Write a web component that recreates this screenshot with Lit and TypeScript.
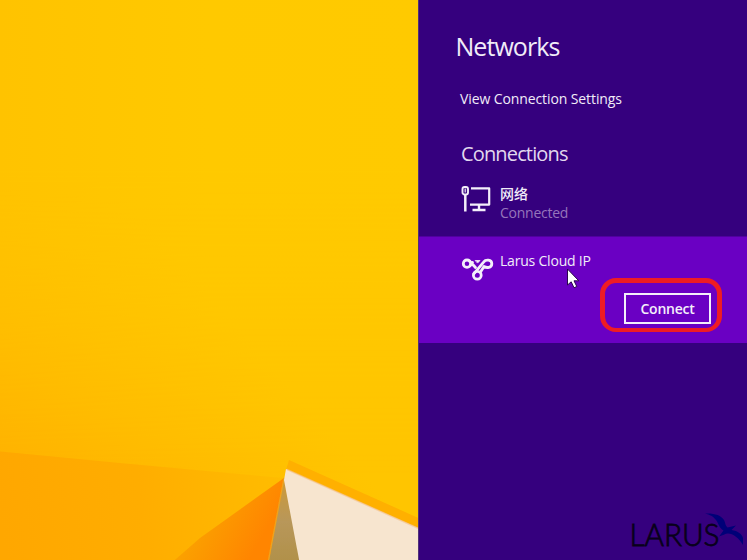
import { LitElement, html, css } from "lit";
import { customElement } from "lit/decorators.js";

@customElement("wall-paper")
class WallPaper extends LitElement {
  static styles = css`
    :host { display: block; overflow: hidden; }
    svg { display: block; }
  `;
  render() {
    return html`<svg width="418" height="560" viewBox="0 0 418 560">
      <defs>
        <linearGradient id="sky" gradientUnits="userSpaceOnUse" x1="20" y1="520" x2="240" y2="330">
          <stop offset="0" stop-color="#ffb000" />
          <stop offset="0.5" stop-color="#ffbb00" />
          <stop offset="1" stop-color="#ffc500" />
        </linearGradient>
        <linearGradient id="top" x1="0" y1="0" x2="1" y2="0">
          <stop offset="0" stop-color="#ffc300" />
          <stop offset="0.5" stop-color="#ffc900" />
          <stop offset="1" stop-color="#ffca00" />
        </linearGradient>
        <linearGradient id="fade" x1="0" y1="0" x2="0" y2="1">
          <stop offset="0" stop-color="#fff" />
          <stop offset="0.3" stop-color="#fff" />
          <stop offset="0.85" stop-color="#000" />
        </linearGradient>
        <mask id="m"><rect width="418" height="560" fill="url(#fade)" /></mask>
        <linearGradient id="low" gradientUnits="userSpaceOnUse" x1="0" y1="520" x2="280" y2="478">
          <stop offset="0" stop-color="#ffa700" />
          <stop offset="0.5" stop-color="#ffad00" />
          <stop offset="1" stop-color="#ffbc00" />
        </linearGradient>
        <linearGradient id="fold" gradientUnits="userSpaceOnUse" x1="205" y1="515" x2="258" y2="545">
          <stop offset="0" stop-color="#fba000" />
          <stop offset="1" stop-color="#ff8500" />
        </linearGradient>
        <linearGradient id="tan" x1="0" y1="0" x2="0" y2="1">
          <stop offset="0" stop-color="#cf9a35" />
          <stop offset="0.5" stop-color="#b8975a" />
          <stop offset="1" stop-color="#b09048" />
        </linearGradient>
        <filter id="soft"><feGaussianBlur stdDeviation="0.6" /></filter>
      </defs>
      <rect width="418" height="560" fill="url(#sky)" />
      <rect width="418" height="560" fill="url(#top)" mask="url(#m)" />
      <g filter="url(#soft)">
        <path d="M-5 451L120 463L283 478L283 565H-5Z" fill="url(#low)" />
        <path d="M284 478L200 538L168 566H272Z" fill="url(#fold)" />
        <path d="M284 477L268 566H303L287 485Z" fill="url(#tan)" />
        <path d="M284 478L268 563" stroke="#f0a31c" stroke-width="1.3" />
        <path d="M289 460L423 520V531L286 470Z" fill="#ffb000" />
        <path d="M286 469L425 531V570H301L284 480Z" fill="#f7e5cf" />
        <path d="M287 469.5L422 530" stroke="#f5c18b" stroke-width="1.5" opacity=".6" />
      </g>
    </svg>`;
  }
}

const ethernet = html`<svg width="32" height="30" viewBox="0 0 32 30" fill="none" stroke="#f4effa">
  <rect x="0.500" y="3" width="5.500" height="7.500" rx="2" stroke-width="1.900" />
  <path d="M3.300 4.500V8.500" stroke-width="1.600" opacity=".8" />
  <path d="M3.300 10V27.500" stroke-width="2.500" />
  <path d="M9 4.400H27.200V20.600H8" stroke-width="2.200" stroke-linejoin="round" />
  <path d="M17 20.600V26M10.500 26H23.500" stroke-width="2.400" />
</svg>`;

const vpn = html`<svg width="32" height="24" viewBox="0 0 32 24" fill="none" stroke="#f4effa" stroke-width="2.800" stroke-linecap="round" stroke-linejoin="round">
  <circle cx="5" cy="5.700" r="3.700" />
  <circle cx="15.300" cy="17.300" r="3.900" />
  <path d="M7.500 3L13.500 9.500M8.300 7.500L10.500 4.500" />
  <path d="M11.800 15.800L21.800 3.800C23.500 1.500 29.800 1.200 29.800 5.700S24.500 10 22 8.500L18.500 14" />
  <path d="M13.500 2.500H18L15.800 4.800Z" stroke-width=".8" fill="#f4effa" />
</svg>`;

@customElement("app-root")
class AppRoot extends LitElement {
  static styles = css`
    :host {
      display: grid;
      grid-template-columns: 418px 1fr;
      width: 747px;
      height: 560px;
      overflow: hidden;
      position: relative;
      font-family: "Open Sans", "Noto Sans", "Noto Sans CJK SC", sans-serif;
      color: #f1ecf8;
    }
    svg { overflow: visible; }
    .panel {
      background: #35007e;
      border-left: 1px solid #50307a;
      display: flex;
      flex-direction: column;
      white-space: nowrap;
    }
    h1, h2 { font-weight: 400; margin: 0; }
    h1 { font-size: 25px; line-height: 34px; margin: 29px 0 0 36.500px; letter-spacing: -0.95px; }
    .settings { font-size: 14px; line-height: 20px; margin: 26px 0 0 41px; letter-spacing: -0.1px; }
    h2 { font-size: 20px; line-height: 28px; margin: 31px 0 0 42px; letter-spacing: -0.85px; color: #e2d8ee; }
    .row { display: flex; padding-left: 43px; gap: 6px; }
    .wired { height: 53px; padding-top: 15px; }
    .wired svg { margin-top: 1px; }
    .name { font-size: 14px; line-height: 20px; letter-spacing: -0.2px; }
    .cjk { font-family: "Noto Sans CJK SC", sans-serif; letter-spacing: 0; font-weight: 500; }
    .state { font-size: 14px; line-height: 20px; color: #9675bb; letter-spacing: -0.25px; }
    .active { height: 107px; background: #6a00c3; border-top: 1px solid #5000a0; box-sizing: border-box; display: flex; flex-direction: column; }
    .active .row { padding-top: 14px; height: 43px; box-sizing: border-box; }
    .active svg { margin-top: 7px; }
    button {
      margin: 13px 36px 0 auto;
      width: 87px; height: 31px;
      box-sizing: border-box;
      border: 2px solid #f4effa;
      background: none; color: #f4effa;
      font: 600 14px/27px "Open Sans", sans-serif;
      letter-spacing: -0.25px;
      padding: 0;
    }
    .mark { position: absolute; left: 600px; top: 278px; width: 122px; height: 54px; box-sizing: border-box; border: 5px solid #ee1c24; border-bottom-width: 4px; border-radius: 16px; }
    .cursor { position: absolute; left: 566px; top: 268px; }
    .logo { position: absolute; left: 627px; top: 508px; }
    .word { font-family: Lato, sans-serif; font-size: 31px; font-weight: 300; }
  `;
  render() {
    return html`
      <wall-paper></wall-paper>
      <section class="panel">
        <h1>Networks</h1>
        <div class="settings">View Connection Settings</div>
        <h2>Connections</h2>
        <div class="row wired">
          ${ethernet}
          <div><div class="name cjk">网络</div><div class="state">Connected</div></div>
        </div>
        <div class="active">
          <div class="row">${vpn}<div class="name">Larus Cloud IP</div></div>
          <button>Connect</button>
        </div>
      </section>
      <div class="mark"></div>
      <svg class="cursor" width="14" height="21" viewBox="0 0 14 21">
        <path d="M1.500 1V17L5.200 13.800L8 19.800L10.800 18.500L8 12.800H12.800Z" fill="#fff" stroke="#2a064d" />
      </svg>
      <svg class="logo" width="120" height="44" viewBox="0 0 120 44">
        <text class="word" x="2.500" y="37.500" textLength="90" lengthAdjust="spacingAndGlyphs" fill="#08001a" stroke="#08001a" stroke-width=".8">LARUS</text>
        <path d="M78 5.500C87 5 94 7 97 12C98.500 15 98 17 100.500 19.500L109 17.500L104.500 22C111 23 115 26 116 30V37C112 30 106 25.500 101 25.500C98 25.500 96 27.500 92 28.500L96.500 22.500C92 20 92 16 89 12C86 8 83 7 78 5.500Z" fill="#000078" />
      </svg>
    `;
  }
}
